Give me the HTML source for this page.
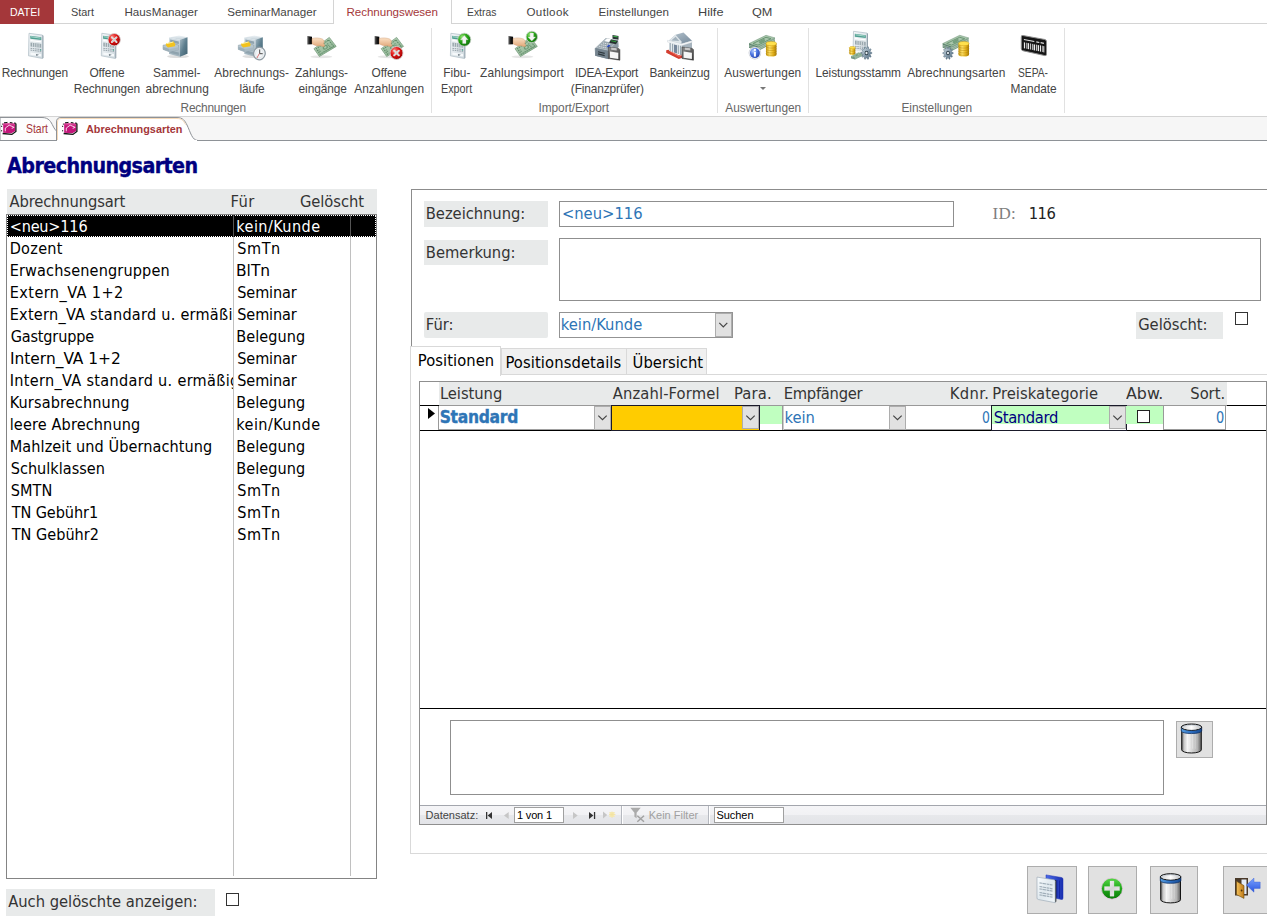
<!DOCTYPE html>
<html lang="de"><head><meta charset="utf-8"><title>Abrechnungsarten</title>
<style>
html,body{margin:0;padding:0;background:#fff;}
body{width:1267px;height:923px;position:relative;overflow:hidden;}
.b{position:absolute;box-sizing:border-box;}
.t{position:absolute;white-space:pre;line-height:1.2;transform-origin:0 0;}
.p{display:inline-block;width:0;height:0;}
svg{position:absolute;overflow:visible;}
.f-seg{font-family:"Liberation Sans", sans-serif;font-size:11.9px;font-weight:400;}
.f-menu{font-family:"Liberation Sans", sans-serif;font-size:11.6px;font-weight:400;}
.f-segb{font-family:"Liberation Sans", sans-serif;font-size:11.5px;font-weight:700;}
.f-tah{font-family:"DejaVu Sans Condensed", "DejaVu Sans", "Liberation Sans", sans-serif;font-size:16.4px;font-weight:400;font-stretch:condensed;}
.f-lst{font-family:"DejaVu Sans Condensed", "DejaVu Sans", "Liberation Sans", sans-serif;font-size:16.1px;font-weight:400;font-stretch:condensed;}
.f-tahb{font-family:"DejaVu Sans Condensed", "DejaVu Sans", "Liberation Sans", sans-serif;font-size:17.3px;font-weight:700;font-stretch:condensed;-webkit-text-stroke:0.35px currentColor;}
.f-title{font-family:"DejaVu Sans Condensed", "DejaVu Sans", "Liberation Sans", sans-serif;font-size:21.3px;font-weight:700;font-stretch:condensed;-webkit-text-stroke:0.35px currentColor;}
.f-ser{font-family:"Liberation Serif", serif;font-size:17px;font-weight:400;}
.f-nav{font-family:"Liberation Sans", sans-serif;font-size:11px;font-weight:400;}
</style></head><body>

<div class="b" style="left:0px;top:23px;width:1267px;height:1px;background:#d4d4d4;"></div>
<div class="b" style="left:0px;top:0px;width:54px;height:24px;background:#a4373a;"></div>
<div class="b" style="left:333px;top:0px;width:119px;height:24px;background:#fff;border:1px solid #d4d4d4;border-bottom:none;border-top:none;"></div>
<div class="b" style="left:0px;top:116px;width:1267px;height:1px;background:#d4d4d4;"></div>
<div class="b" style="left:431px;top:28px;width:1px;height:85px;background:#e1e1e1;"></div>
<div class="b" style="left:717px;top:28px;width:1px;height:85px;background:#e1e1e1;"></div>
<div class="b" style="left:808px;top:28px;width:1px;height:85px;background:#e1e1e1;"></div>
<div class="b" style="left:1064px;top:28px;width:1px;height:85px;background:#e1e1e1;"></div>
<svg style="left:759.500px;top:86.500px" width="6" height="3"><path d="M0 0h6L3 3z" fill="#777"/></svg>
<div class="b" style="left:0px;top:117px;width:1267px;height:24px;background:#f6f6f6;"></div>
<div class="b" style="left:0px;top:140px;width:1267px;height:1px;background:#8e9297;"></div>
<svg style="left:0;top:117px" width="210" height="24" viewBox="0 0 210 24">
<path d="M0 0.500H42C49 0.500 51 5 53 9 54.500 12 55.500 13 56.500 14V23.500H0z" fill="#fdfdfd" stroke="#8e9297" stroke-width="1"/>
<path d="M56.500 24V5C56.500 2 58 0.500 61 0.500H177C183 0.500 185 4 187 8 190.500 15 192 23.500 198 23.500" fill="#fff" stroke="#8e9297" stroke-width="1"/>
<path d="M57.200 24H197" stroke="#fff" stroke-width="2"/>
<path d="M57.500 23V5C57.500 3 59 1.500 61 1.500H177C181.500 1.500 183.500 3.500 185.500 7.500" fill="none" stroke="#f5d9b8" stroke-width="1"/>
</svg>
<div class="b" style="left:7px;top:189px;width:370px;height:25px;background:#e8eaea;"></div>
<div class="b" style="left:6px;top:214px;width:371px;height:665px;background:#fff;border:1px solid #848484;"></div>
<div class="b" style="left:233px;top:215px;width:1px;height:661px;background:#c0c0c0;"></div>
<div class="b" style="left:350px;top:215px;width:1px;height:661px;background:#c0c0c0;"></div>
<div class="b" style="left:7px;top:215px;width:369px;height:22px;background:#000;outline:1px dotted #fff;outline-offset:-1px;"></div>
<div class="b" style="left:233px;top:215px;width:1px;height:22px;background:#555;"></div>
<div class="b" style="left:350px;top:215px;width:1px;height:22px;background:#555;"></div>
<div class="b" style="left:6px;top:889px;width:209px;height:27px;background:#e8eaea;"></div>
<div class="b" style="left:226px;top:893px;width:13px;height:13px;background:#fff;border:1px solid #333;"></div>
<div class="b" style="left:411px;top:189px;width:870px;height:1px;background:#8c8c8c;"></div>
<div class="b" style="left:411px;top:189px;width:1px;height:157px;background:#8c8c8c;"></div>
<div class="b" style="left:424px;top:201px;width:124px;height:26px;background:#e8eaea;"></div>
<div class="b" style="left:559px;top:201px;width:395px;height:26px;background:#fff;border:1px solid #8f8f8f;"></div>
<div class="b" style="left:424px;top:240px;width:124px;height:25px;background:#e8eaea;"></div>
<div class="b" style="left:559px;top:238px;width:702px;height:63px;background:#fff;border:1px solid #8f8f8f;"></div>
<div class="b" style="left:424px;top:312px;width:124px;height:26px;background:#e8eaea;border-radius:2px;"></div>
<div class="b" style="left:559px;top:312px;width:174px;height:26px;background:#fff;border:1px solid #939393;"></div>
<div class="b" style="left:715px;top:313px;width:17px;height:24px;background:#e1e1e1;border:1px solid #adadad;"></div>
<svg style="left:719px;top:322px" width="9" height="6"><path d="M0.300 0.800L4.300 4.800 8.300 0.800" fill="none" stroke="#444" stroke-width="1.200"/></svg>
<div class="b" style="left:1136px;top:312px;width:87px;height:27px;background:#e8eaea;"></div>
<div class="b" style="left:1235px;top:312px;width:13px;height:13px;background:#fff;border:1px solid #333;"></div>
<div class="b" style="left:410px;top:374px;width:870px;height:1px;background:#d9d9d9;"></div>
<div class="b" style="left:410px;top:374px;width:1px;height:480px;background:#d9d9d9;"></div>
<div class="b" style="left:410px;top:853px;width:870px;height:1px;background:#d9d9d9;"></div>
<div class="b" style="left:410px;top:346px;width:91px;height:30px;background:#fff;border:1px solid #d9d9d9;border-bottom:none;"></div>
<div class="b" style="left:501px;top:348px;width:126px;height:27px;background:#f0f0f0;border:1px solid #d9d9d9;"></div>
<div class="b" style="left:626px;top:348px;width:81px;height:27px;background:#f0f0f0;border:1px solid #d9d9d9;"></div>
<div class="b" style="left:419px;top:381px;width:848px;height:444px;background:#fff;border:1px solid #8f8f8f;"></div>
<div class="b" style="left:439px;top:382px;width:788px;height:23px;background:#e8eaea;"></div>
<div class="b" style="left:420px;top:405px;width:846px;height:1px;background:#999;"></div>
<div class="b" style="left:420px;top:405px;width:19px;height:1px;background:#000;"></div>
<div class="b" style="left:1227px;top:405px;width:39px;height:1px;background:#000;"></div>
<div class="b" style="left:420px;top:430px;width:846px;height:1px;background:#000;"></div>
<div class="b" style="left:438px;top:406px;width:1px;height:24px;background:#999;"></div>
<div class="b" style="left:439px;top:429px;width:172px;height:1px;background:#a0a0a0;"></div>
<div class="b" style="left:784px;top:429px;width:207px;height:1px;background:#a0a0a0;"></div>
<svg style="left:428px;top:408px" width="7" height="11"><path d="M0 0L7 5.500 0 11z" fill="#000"/></svg>
<div class="b" style="left:594px;top:406px;width:17px;height:24px;background:#e1e1e1;border:1px solid #adadad;"></div>
<svg style="left:598px;top:415px" width="9" height="6"><path d="M0.3 0.6L4.500 4.600 8.700 0.600" fill="none" stroke="#444" stroke-width="1.200"/></svg>
<div class="b" style="left:611px;top:405px;width:149px;height:26px;background:#ffcc00;border:1px solid #1a1a2a;"></div>
<div class="b" style="left:742px;top:406px;width:17px;height:23px;background:#e1e1e1;border:1px solid #adadad;"></div>
<svg style="left:746px;top:415px" width="9" height="6"><path d="M0.3 0.6L4.500 4.600 8.700 0.600" fill="none" stroke="#444" stroke-width="1.200"/></svg>
<div class="b" style="left:760px;top:406px;width:22px;height:18px;background:#c0ffc0;"></div>
<div class="b" style="left:782px;top:406px;width:1px;height:24px;background:#999;"></div>
<div class="b" style="left:783px;top:406px;width:1px;height:24px;background:#ccc;"></div>
<div class="b" style="left:889px;top:406px;width:17px;height:24px;background:#e1e1e1;border:1px solid #adadad;"></div>
<svg style="left:893px;top:415px" width="9" height="6"><path d="M0.3 0.6L4.500 4.600 8.700 0.600" fill="none" stroke="#444" stroke-width="1.200"/></svg>
<div class="b" style="left:991px;top:405px;width:136px;height:26px;background:#fff;border:1px solid #1a1a2a;"></div>
<div class="b" style="left:992px;top:406px;width:117px;height:18px;background:#c0ffc0;"></div>
<div class="b" style="left:1109px;top:406px;width:17px;height:23px;background:#e1e1e1;border:1px solid #adadad;"></div>
<svg style="left:1113px;top:415px" width="9" height="6"><path d="M0.3 0.6L4.500 4.600 8.700 0.600" fill="none" stroke="#444" stroke-width="1.200"/></svg>
<div class="b" style="left:1126px;top:406px;width:37px;height:18px;background:#c0ffc0;"></div>
<div class="b" style="left:1137px;top:410px;width:13px;height:13px;background:#fff;border:1px solid #222;"></div>
<div class="b" style="left:1163px;top:406px;width:63px;height:24px;background:#fff;border:1px solid #999;border-top:none;"></div>
<div class="b" style="left:420px;top:708px;width:846px;height:1px;background:#000;"></div>
<div class="b" style="left:450px;top:720px;width:714px;height:75px;background:#fff;border:1px solid #8f8f8f;"></div>
<div class="b" style="left:1176px;top:721px;width:37px;height:37px;background:#e1e1e1;border:1px solid #adadad;"></div>
<div class="b" style="left:420px;top:805px;width:846px;height:19px;background:linear-gradient(#f5f5f7 0,#f1f1f4 50%,#e7e8eb 50%,#e3e4e8 100%);border-top:1px solid #a3a6ad;"></div>
<div class="b" style="left:621px;top:806px;width:1px;height:18px;background:#b5b8bf;"></div>
<div class="b" style="left:622px;top:806px;width:1px;height:18px;background:#fff;"></div>
<div class="b" style="left:708px;top:806px;width:1px;height:18px;background:#b5b8bf;"></div>
<div class="b" style="left:709px;top:806px;width:1px;height:18px;background:#fff;"></div>
<div class="b" style="left:514px;top:807px;width:50px;height:16px;background:#fff;border:1px solid #a0a0a0;"></div>
<div class="b" style="left:714px;top:807px;width:70px;height:16px;background:#fff;border:1px solid #a0a0a0;"></div>
<svg style="left:486px;top:811.500px" width="7" height="7"><path d="M0.650 0v7" stroke="#333" stroke-width="1.300"/><path d="M6 0L1.600 3.500 6 7z" fill="#333"/></svg>
<svg style="left:503.500px;top:811.500px" width="5" height="7"><path d="M4.700 0L0 3.500 4.700 7z" fill="#c6c6c6"/></svg>
<svg style="left:572.500px;top:811.500px" width="5" height="7"><path d="M0 0L4.700 3.500 0 7z" fill="#c6c6c6"/></svg>
<svg style="left:588.800px;top:811.500px" width="7" height="7"><path d="M5.550 0v7" stroke="#333" stroke-width="1.300"/><path d="M0 0L4.400 3.500 0 7z" fill="#333"/></svg>
<svg style="left:603px;top:811px" width="13" height="8"><path d="M0 0.500L4.200 4 0 7.500z" fill="#c6c6c6"/><path d="M6.500 1h5v5h-5z" fill="#f6ebba"/><path d="M6 3.500h6.500M9 0.500v6.500M6.800 1.300l4.400 4.400M11.200 1.300l-4.400 4.400" stroke="#f3e2a0" stroke-width=".8"/></svg>
<svg style="left:630px;top:807px" width="16" height="15"><path d="M0.300 0.800h10.400L6.600 5.800v5.400l-2.200-1.500V5.800z" fill="#ababab"/><path d="M7.300 8.800l6.700 6M14 8.800l-6.700 6" stroke="#a2a2a2" stroke-width="1.500"/></svg>
<div class="b" style="left:1027px;top:866px;width:50px;height:48px;background:#e1e1e1;border:1px solid #adadad;"></div>
<div class="b" style="left:1088px;top:866px;width:49px;height:48px;background:#e1e1e1;border:1px solid #adadad;"></div>
<div class="b" style="left:1150px;top:866px;width:48px;height:48px;background:#e1e1e1;border:1px solid #adadad;"></div>
<div class="b" style="left:1223px;top:866px;width:50px;height:48px;background:#e1e1e1;border:1px solid #adadad;"></div>
<svg style="left:0;top:0" width="1267" height="923" viewBox="0 0 1267 923"><defs><linearGradient id="g1" x1="0" y1="0" x2="1" y2="1"><stop offset="0" stop-color="#f4f7f9"/><stop offset="1" stop-color="#cfd9df"/></linearGradient><radialGradient id="g2" cx="0.35" cy="0.3" r="0.75"><stop offset="0" stop-color="#ff8a80"/><stop offset="0.45" stop-color="#e01818"/><stop offset="1" stop-color="#a00000"/></radialGradient><radialGradient id="g3" cx="0.35" cy="0.3" r="0.75"><stop offset="0" stop-color="#9be87a"/><stop offset="0.45" stop-color="#2aa818"/><stop offset="1" stop-color="#0c6e08"/></radialGradient><radialGradient id="g4" cx="0.35" cy="0.3" r="0.75"><stop offset="0" stop-color="#b4ccff"/><stop offset="0.5" stop-color="#4a74e0"/><stop offset="1" stop-color="#2444b0"/></radialGradient><linearGradient id="g5" x1="0" y1="0" x2="1" y2="0"><stop offset="0" stop-color="#c89a10"/><stop offset="0.35" stop-color="#ffe26a"/><stop offset="0.7" stop-color="#e6b41c"/><stop offset="1" stop-color="#a87c08"/></linearGradient><linearGradient id="g6" x1="0" y1="0" x2="1" y2="1"><stop offset="0" stop-color="#a9bcc6"/><stop offset="0.5" stop-color="#5e7f8f"/><stop offset="1" stop-color="#3f6070"/></linearGradient><linearGradient id="g7" x1="0" y1="0" x2="0" y2="1"><stop offset="0" stop-color="#d6e0e6"/><stop offset="1" stop-color="#9fb2bc"/></linearGradient><linearGradient id="g8" x1="0" y1="0" x2="0" y2="1"><stop offset="0" stop-color="#eef3f6"/><stop offset="1" stop-color="#c2d0d8"/></linearGradient><linearGradient id="g9" x1="0" y1="0" x2="0" y2="1"><stop offset="0" stop-color="#fbe0c4"/><stop offset="1" stop-color="#e0a678"/></linearGradient><linearGradient id="g10" x1="0" y1="0" x2="1" y2="1"><stop offset="0" stop-color="#bcd6bd"/><stop offset="1" stop-color="#86ad8a"/></linearGradient><linearGradient id="g11" x1="0" y1="0" x2="1" y2="0"><stop offset="0" stop-color="#6a6a6a"/><stop offset="0.5" stop-color="#1a1a1a"/><stop offset="1" stop-color="#000"/></linearGradient><linearGradient id="g12" x1="0" y1="0" x2="1" y2="0"><stop offset="0" stop-color="#5a5a5a"/><stop offset="0.12" stop-color="#c8c8c8"/><stop offset="0.3" stop-color="#f4f4f4"/><stop offset="0.55" stop-color="#d2d2d2"/><stop offset="0.8" stop-color="#b4b4b4"/><stop offset="1" stop-color="#5a5a5a"/></linearGradient><linearGradient id="g13" x1="0" y1="0" x2="1" y2="0"><stop offset="0" stop-color="#5aa0e0"/><stop offset="0.5" stop-color="#2a6cc0"/><stop offset="1" stop-color="#174a90"/></linearGradient><linearGradient id="g14" x1="0" y1="0" x2="1" y2="1"><stop offset="0" stop-color="#dfe8ee"/><stop offset="0.5" stop-color="#8aa0b0"/><stop offset="1" stop-color="#4a6478"/></linearGradient><linearGradient id="g15" x1="0" y1="0" x2="1" y2="1"><stop offset="0" stop-color="#b8c6d0"/><stop offset="1" stop-color="#74889a"/></linearGradient><linearGradient id="g16" x1="0" y1="0" x2="1" y2="1"><stop offset="0" stop-color="#8c8c8c"/><stop offset="1" stop-color="#3c3c3c"/></linearGradient><linearGradient id="g17" x1="0" y1="0" x2="0" y2="1"><stop offset="0" stop-color="#cdd5da"/><stop offset="1" stop-color="#7e8c96"/></linearGradient><linearGradient id="g18" x1="0" y1="0" x2="1" y2="0"><stop offset="0" stop-color="#4a6ae8"/><stop offset="1" stop-color="#1a30b0"/></linearGradient><linearGradient id="g19" x1="0" y1="0" x2="0" y2="1"><stop offset="0" stop-color="#5ad84a"/><stop offset="0.5" stop-color="#1ea818"/><stop offset="1" stop-color="#0c7a0a"/></linearGradient><linearGradient id="g20" x1="0" y1="0" x2="1" y2="1"><stop offset="0" stop-color="#ffffff"/><stop offset="0.5" stop-color="#d4d4d4"/><stop offset="1" stop-color="#f4f4f4"/></linearGradient><linearGradient id="g21" x1="0" y1="0" x2="0" y2="1"><stop offset="0" stop-color="#7aa2ff"/><stop offset="1" stop-color="#2a56e0"/></linearGradient><linearGradient id="g22" x1="0" y1="0" x2="1" y2="1"><stop offset="0" stop-color="#fafdff"/><stop offset="0.5" stop-color="#dfe8ee"/><stop offset="1" stop-color="#f2f7fa"/></linearGradient><linearGradient id="g23" x1="0" y1="0" x2="1" y2="0"><stop offset="0" stop-color="#d8d8d8"/><stop offset="0.5" stop-color="#ffffff"/><stop offset="1" stop-color="#c8c8c8"/></linearGradient><linearGradient id="g24" x1="0" y1="0" x2="1" y2="0"><stop offset="0" stop-color="#f2c05a"/><stop offset="1" stop-color="#c07a18"/></linearGradient></defs><g transform="translate(28 32.5)"><path d="M1 0.800L14.500 2.600V26L0.500 23.300z" fill="url(#g1)" stroke="#aebbc4" stroke-width="0.700"/>
<path d="M2.300 3.300L13.300 4.800V7.600L2.300 6.200z" fill="#4f9f90"/>
<path d="M3 4.300l9.500 1.300" stroke="#bfe4da" stroke-width="0.800"/>
<path d="M2.500 8L13.200 9.400" stroke="#fff" stroke-width="1.200"/>
<path d="M2.500 10L13.200 11.400V15.200L2.500 14z" fill="#9aa8ae"/>
<path d="M4.500 10.300v4M6.700 10.600v4M8.900 10.900v4M11.100 11.200v4" stroke="#dfe6ea" stroke-width="0.800"/>
<path d="M2.500 15.800L13.200 17.100M2.500 17.600L13.200 18.900" stroke="#8e9ca4" stroke-width="0.900" stroke-dasharray="1.600 0.700"/>
<path d="M12 16.800l1.200.2v1.200l-1.200-.2z" fill="#49a08e"/>
<path d="M2.500 20L13.200 21.500V24L2.500 22.300z" fill="#f6f9fb"/>
<path d="M8 21.600l3 .6-2.600 1.300z" fill="#6a7880"/>
<path d="M14.500 2.600l1 .6V25.400l-1 .6z" fill="#93a2ac"/></g>
<g transform="translate(100.8 32.5)"><path d="M1 0.800L14.500 2.600V26L0.500 23.300z" fill="url(#g1)" stroke="#aebbc4" stroke-width="0.700"/>
<path d="M2.300 3.300L13.300 4.800V7.600L2.300 6.200z" fill="#4f9f90"/>
<path d="M3 4.300l9.500 1.300" stroke="#bfe4da" stroke-width="0.800"/>
<path d="M2.500 8L13.200 9.400" stroke="#fff" stroke-width="1.200"/>
<path d="M2.500 10L13.200 11.400V15.200L2.500 14z" fill="#9aa8ae"/>
<path d="M4.500 10.300v4M6.700 10.600v4M8.900 10.900v4M11.100 11.200v4" stroke="#dfe6ea" stroke-width="0.800"/>
<path d="M2.500 15.800L13.200 17.100M2.500 17.600L13.200 18.900" stroke="#8e9ca4" stroke-width="0.900" stroke-dasharray="1.600 0.700"/>
<path d="M12 16.800l1.200.2v1.200l-1.200-.2z" fill="#49a08e"/>
<path d="M2.500 20L13.200 21.500V24L2.500 22.300z" fill="#f6f9fb"/>
<path d="M8 21.600l3 .6-2.600 1.300z" fill="#6a7880"/>
<path d="M14.500 2.600l1 .6V25.400l-1 .6z" fill="#93a2ac"/></g>
<g transform="translate(114.2 39.7)"><circle r="6.2" fill="url(#g2)" stroke="#d8d0d0" stroke-width="0.900"/>
<path d="M-2.300-2.300L2.300 2.300M2.300-2.300L-2.300 2.300" stroke="#e6e6e6" stroke-width="2" stroke-linecap="round"/>
<path d="M-2.300-2.300L2.300 2.300M2.300-2.300L-2.300 2.300" stroke="#bdbdbd" stroke-width=".8" stroke-linecap="round" opacity=".7"/></g>
<g transform="translate(163 35.2)"><ellipse cx="15" cy="21.300" rx="11" ry="1.600" fill="#000" opacity=".13"/>
<path d="M6 2.200L16 0.300 24.500 2 17 4.500z" fill="url(#g8)"/>
<path d="M17 4.500L24.500 2V18.500L17 21.500z" fill="url(#g6)"/>
<path d="M6 2.200L17 4.500V21.500L6 18.800z" fill="url(#g7)"/>
<path d="M7.200 4.300L15.800 6.200V8.800L7.200 7.200z" fill="#8fa3ae"/>
<path d="M7.200 15.200L15.800 17.200V19.800L7.200 17.800z" fill="#8fa3ae"/>
<path d="M0 10L10 8.300 15.500 9.800V14.600L6.500 16.600 0 14.200z" fill="#b7c6ce" stroke="#8a9ca6" stroke-width=".5"/>
<path d="M3 8.300L10.500 6.300 12.300 8.800 12 11 4.800 12.300 2.800 10z" fill="#f2c21e"/>
<path d="M3.500 8.500L10.300 6.800" stroke="#fff2a0" stroke-width="1"/>
<path d="M0 11.500L6.500 13.800V16.600L0 14.200z" fill="#9cafb9"/>
<path d="M6.500 13.800L15.500 12V14.600L6.500 16.600z" fill="#a9bac3"/></g>
<g transform="translate(238.3 35.2)"><ellipse cx="15" cy="21.300" rx="11" ry="1.600" fill="#000" opacity=".13"/>
<path d="M6 2.200L16 0.300 24.500 2 17 4.500z" fill="url(#g8)"/>
<path d="M17 4.500L24.500 2V18.500L17 21.500z" fill="url(#g6)"/>
<path d="M6 2.200L17 4.500V21.500L6 18.800z" fill="url(#g7)"/>
<path d="M7.200 4.300L15.800 6.200V8.800L7.200 7.200z" fill="#8fa3ae"/>
<path d="M7.200 15.200L15.800 17.200V19.800L7.200 17.800z" fill="#8fa3ae"/>
<path d="M0 10L10 8.300 15.500 9.800V14.600L6.500 16.600 0 14.200z" fill="#b7c6ce" stroke="#8a9ca6" stroke-width=".5"/>
<path d="M3 8.300L10.500 6.300 12.300 8.800 12 11 4.800 12.300 2.800 10z" fill="#f2c21e"/>
<path d="M3.500 8.500L10.300 6.800" stroke="#fff2a0" stroke-width="1"/>
<path d="M0 11.500L6.500 13.800V16.600L0 14.200z" fill="#9cafb9"/>
<path d="M6.500 13.800L15.500 12V14.600L6.500 16.600z" fill="#a9bac3"/></g>
<g transform="translate(259.4 53.5)"><ellipse rx="5.796" ry="6.3" transform="rotate(12)" fill="#f2f5f7" stroke="#8e9aa2" stroke-width="1.300"/>
<ellipse rx="3.78" ry="4.536" transform="rotate(12)" fill="none" stroke="#dfe4e8" stroke-width=".8"/>
<path d="M0.300-4V0.200H3.300" fill="none" stroke="#4a4a4a" stroke-width="1"/>
<path d="M0 0L-2.500 4.500" stroke="#d04040" stroke-width=".7"/></g>
<g transform="translate(307.3 36)"><ellipse cx="14" cy="20.800" rx="11" ry="1.500" fill="#000" opacity=".10"/>
<path d="M22 1.400L28.900 10.400 12.100 20.500 6.600 12.700z" fill="url(#g10)" stroke="#6f9676" stroke-width=".7"/>
<path d="M21.300 4L26.300 10.300 12.800 18.300 9 12.800z" fill="none" stroke="#5f8c6a" stroke-width="1.100" stroke-dasharray="1.500 .8"/>
<path d="M20 7.500L23.500 11.800M13 15.800L11 13" stroke="#6a9472" stroke-width="1.400" stroke-dasharray="1 .7"/>
<ellipse cx="18" cy="11.300" rx="2.800" ry="2.100" transform="rotate(-30 18 11.300)" fill="#6f9c78"/>
<ellipse cx="18" cy="11.300" rx="1.400" ry="1" transform="rotate(-30 18 11.300)" fill="#a9c9ae"/>
<path d="M0 0L4.700 .8V8.300L0 8.600z" fill="url(#g11)"/>
<path d="M4.700 2.500C8 1.600 12 1.800 15 3 17 4.200 17.300 5.800 16.300 7.300L17.500 9.500 16.500 10.800 12.500 9.800C10 10.300 7.500 9.500 4.700 7.800z" fill="url(#g9)" stroke="#c98f62" stroke-width=".4"/></g>
<g transform="translate(374.6 36)"><ellipse cx="14" cy="20.800" rx="11" ry="1.500" fill="#000" opacity=".10"/>
<path d="M22 1.400L28.900 10.400 12.100 20.500 6.600 12.700z" fill="url(#g10)" stroke="#6f9676" stroke-width=".7"/>
<path d="M21.300 4L26.300 10.300 12.800 18.300 9 12.800z" fill="none" stroke="#5f8c6a" stroke-width="1.100" stroke-dasharray="1.500 .8"/>
<path d="M20 7.500L23.500 11.800M13 15.800L11 13" stroke="#6a9472" stroke-width="1.400" stroke-dasharray="1 .7"/>
<ellipse cx="18" cy="11.300" rx="2.800" ry="2.100" transform="rotate(-30 18 11.300)" fill="#6f9c78"/>
<ellipse cx="18" cy="11.300" rx="1.400" ry="1" transform="rotate(-30 18 11.300)" fill="#a9c9ae"/>
<path d="M0 0L4.700 .8V8.300L0 8.600z" fill="url(#g11)"/>
<path d="M4.700 2.500C8 1.600 12 1.800 15 3 17 4.200 17.300 5.800 16.300 7.300L17.500 9.500 16.500 10.800 12.500 9.800C10 10.300 7.500 9.500 4.700 7.800z" fill="url(#g9)" stroke="#c98f62" stroke-width=".4"/></g>
<g transform="translate(396.5 53)"><circle r="6.5" fill="url(#g2)" stroke="#d8d0d0" stroke-width="0.900"/>
<path d="M-2.300-2.300L2.300 2.300M2.300-2.300L-2.300 2.300" stroke="#e6e6e6" stroke-width="2" stroke-linecap="round"/>
<path d="M-2.300-2.300L2.300 2.300M2.300-2.300L-2.300 2.300" stroke="#bdbdbd" stroke-width=".8" stroke-linecap="round" opacity=".7"/></g>
<g transform="translate(449.9 32.5)"><path d="M1 0.800L14.500 2.600V26L0.500 23.300z" fill="url(#g1)" stroke="#aebbc4" stroke-width="0.700"/>
<path d="M2.300 3.300L13.300 4.800V7.600L2.300 6.200z" fill="#4f9f90"/>
<path d="M3 4.300l9.500 1.300" stroke="#bfe4da" stroke-width="0.800"/>
<path d="M2.500 8L13.200 9.400" stroke="#fff" stroke-width="1.200"/>
<path d="M2.500 10L13.200 11.400V15.200L2.500 14z" fill="#9aa8ae"/>
<path d="M4.500 10.300v4M6.700 10.600v4M8.900 10.900v4M11.100 11.200v4" stroke="#dfe6ea" stroke-width="0.800"/>
<path d="M2.500 15.800L13.200 17.100M2.500 17.600L13.200 18.900" stroke="#8e9ca4" stroke-width="0.900" stroke-dasharray="1.600 0.700"/>
<path d="M12 16.800l1.200.2v1.200l-1.200-.2z" fill="#49a08e"/>
<path d="M2.500 20L13.200 21.500V24L2.500 22.300z" fill="#f6f9fb"/>
<path d="M8 21.600l3 .6-2.600 1.300z" fill="#6a7880"/>
<path d="M14.500 2.600l1 .6V25.400l-1 .6z" fill="#93a2ac"/></g>
<g transform="translate(464.3 39.7)"><circle r="6.5" fill="url(#g3)" stroke="#c8d0c8" stroke-width="0.800"/>
<path d="M0-4.200L3.800 0H1.700V3.800H-1.700V0H-3.800z" fill="#f4f4f4" stroke="#d0d0d0" stroke-width=".3"/></g>
<g transform="translate(508.4 36)"><ellipse cx="14" cy="20.800" rx="11" ry="1.500" fill="#000" opacity=".10"/>
<path d="M22 1.400L28.900 10.400 12.100 20.500 6.600 12.700z" fill="url(#g10)" stroke="#6f9676" stroke-width=".7"/>
<path d="M21.300 4L26.300 10.300 12.800 18.300 9 12.800z" fill="none" stroke="#5f8c6a" stroke-width="1.100" stroke-dasharray="1.500 .8"/>
<path d="M20 7.500L23.500 11.800M13 15.800L11 13" stroke="#6a9472" stroke-width="1.400" stroke-dasharray="1 .7"/>
<ellipse cx="18" cy="11.300" rx="2.800" ry="2.100" transform="rotate(-30 18 11.300)" fill="#6f9c78"/>
<ellipse cx="18" cy="11.300" rx="1.400" ry="1" transform="rotate(-30 18 11.300)" fill="#a9c9ae"/>
<path d="M0 0L4.700 .8V8.300L0 8.600z" fill="url(#g11)"/>
<path d="M4.700 2.500C8 1.600 12 1.800 15 3 17 4.200 17.300 5.800 16.300 7.300L17.500 9.500 16.500 10.800 12.500 9.800C10 10.300 7.500 9.500 4.700 7.800z" fill="url(#g9)" stroke="#c98f62" stroke-width=".4"/></g>
<g transform="translate(531.8 36.9)"><circle r="5.7" fill="url(#g3)" stroke="#c8d0c8" stroke-width="0.800"/>
<path transform="rotate(180)" d="M0-4.200L3.800 0H1.700V3.800H-1.700V0H-3.800z" fill="#f4f4f4" stroke="#d0d0d0" stroke-width=".3"/></g>
<g transform="translate(594.7 34.7)"><path d="M0 13.800L11 3.500 23.500 5.500 24 12 14 24.500 0.500 21z" fill="#8d9aa3"/>
<path d="M11 3.500L23.500 5.500 13.500 16 1 13.300z" fill="#b9c3c9"/>
<path d="M9 6.500L20 8.300 13.500 15 2.500 12.800z" fill="#98a5ad"/>
<path d="M4.500 11.800L12.500 13.400M6.500 10L14.300 11.500M8.300 8.300L16 9.700" stroke="#e4e9ec" stroke-width=".9" stroke-dasharray="1.300 .7"/>
<path d="M12.300 3.800L16.300 4.500 14 7.200 10 6.400z" fill="#fff"/>
<path d="M17.800 .3L23.800 1.200V5L17.800 4z" fill="#2a3436"/>
<path d="M18.500 1.500L23 2.200" stroke="#3fae4a" stroke-width="1.100"/>
<path d="M16.300 4.800L23.300 6 21.300 9.500 14.500 8z" fill="#27312f"/>
<path d="M16.500 6L21.500 7" stroke="#2e9a3a" stroke-width="1.100"/>
<path d="M13.500 10l2.300.4-1.500 2.200-2.300-.4z" fill="#3050c8"/>
<path d="M1 13.300L13.500 16V24.300L0.500 21z" fill="#75848f"/>
<path d="M3.300 17L10 18.700M3.300 19.200L10 20.900" stroke="#2e383e" stroke-width="1.100"/></g>
<g transform="translate(608.4 46.7)"><path d="M0 0.300L10.300 1.700 11.500 3V13.500L0 11.800z" fill="url(#g16)" stroke="#2e2e2e" stroke-width=".5"/>
<path d="M1.600 4.800L9.900 6V12.300L1.600 11z" fill="#f6f6f6"/>
<path d="M2.800 .9L8.300 1.600V3.700L2.800 3z" fill="#c8c8c8"/></g>
<g transform="translate(667 32.5)"><path d="M-0.800 17.800L1.500 17.200 11.500 22.800 16 21.300V25L11.800 26.400-0.800 20.200z" fill="#d43e30"/>
<path d="M3 19.300L11.800 24.200 15 23.200V22L11.500 23 4 18.800z" fill="#ee7466"/>
<path d="M2 8L8.500 2.300 16.500 0 25 8.300 14.500 11.500z" fill="url(#g15)"/>
<path d="M2 8L8.500 2.300 14.500 9V11.500z" fill="#dfe6ea"/>
<path d="M4.300 8L8.600 4.200 12.300 8.600z" fill="#a3b2bd"/>
<path d="M0.500 7.800L14.500 11.300 25 8.200V10L14.500 13.300 0.500 9.600z" fill="#f4f6f8" stroke="#b8c2ca" stroke-width=".3"/>
<path d="M2 10V18.300L14.500 23V13.300z" fill="#e8edf0"/>
<path d="M3.200 10.500V18.600M5.600 11.200V19.500M11.300 12.700V21.600M13.500 13.200V22.400" stroke="#95a4ae" stroke-width="1.100"/>
<path d="M7 12V20L10 21V12.800z" fill="#76869a"/>
<path d="M14.500 13.300L25 10V18L14.500 23z" fill="#a7b4be"/></g>
<g transform="translate(682 46.7)"><path d="M0 0.300L10.300 1.700 11.500 3V13.500L0 11.800z" fill="url(#g16)" stroke="#2e2e2e" stroke-width=".5"/>
<path d="M1.600 4.800L9.900 6V12.300L1.600 11z" fill="#f6f6f6"/>
<path d="M2.800 .9L8.300 1.600V3.700L2.800 3z" fill="#c8c8c8"/></g>
<g transform="translate(749 35.3)"><path d="M0 8.300L17 0 26 2.600 9 11.300z" fill="#a9c6ac" stroke="#6d9276" stroke-width=".5"/>
<path d="M4 8.200L17 2 22 3.400 9 9.800z" fill="none" stroke="#6b9674" stroke-width="1"/>
<ellipse cx="13" cy="5.800" rx="3.300" ry="1.500" transform="rotate(-25 13 5.800)" fill="#759f7e"/>
<path d="M0 8.300L9 11.300V15.800L0 12.500z" fill="#58806a"/>
<path d="M9 11.300L26 2.600V7L9 15.800z" fill="#789c84"/>
<path d="M0 9.800L9 12.800M0 11.200L9 14.300M9 12.800L26 4.100M9 14.300L26 5.600" stroke="#d4e2d4" stroke-width=".5"/></g>
<g transform="translate(766 41.5)"><path d="M0 2.1V12.9A5.25 2.1 0 0 0 10.5 12.9V2.1z" fill="url(#g5)"/><path d="M0 4.5A5.25 2.1 0 0 0 10.5 4.5" fill="none" stroke="#a87a08" stroke-width=".5" opacity=".8"/><path d="M0 6.9A5.25 2.1 0 0 0 10.5 6.9" fill="none" stroke="#a87a08" stroke-width=".5" opacity=".8"/><path d="M0 9.299999999999999A5.25 2.1 0 0 0 10.5 9.299999999999999" fill="none" stroke="#a87a08" stroke-width=".5" opacity=".8"/><path d="M0 11.7A5.25 2.1 0 0 0 10.5 11.7" fill="none" stroke="#a87a08" stroke-width=".5" opacity=".8"/><ellipse cx="5.25" cy="2.1" rx="5.25" ry="2.1" fill="#ffe14e" stroke="#c89a14" stroke-width=".5"/></g>
<g transform="translate(754.9 53.1)"><circle r="6.3" fill="#c4c8d0"/><circle r="5.7" fill="#f4f6fa"/><circle r="5.0" fill="url(#g4)"/>
<rect x="-1" y="-1.300" width="2" height="4.800" fill="#fff"/><circle cy="-3.200" r="1.150" fill="#fff"/></g>
<g transform="translate(852.5 30.5)"><path d="M1 0.800L14.500 2.600V26L0.500 23.300z" fill="url(#g1)" stroke="#aebbc4" stroke-width="0.700"/>
<path d="M2.300 3.300L13.300 4.800V7.600L2.300 6.200z" fill="#4f9f90"/>
<path d="M3 4.300l9.500 1.300" stroke="#bfe4da" stroke-width="0.800"/>
<path d="M2.500 8L13.200 9.400" stroke="#fff" stroke-width="1.200"/>
<path d="M2.500 10L13.200 11.400V15.200L2.500 14z" fill="#9aa8ae"/>
<path d="M4.500 10.300v4M6.700 10.600v4M8.900 10.900v4M11.100 11.200v4" stroke="#dfe6ea" stroke-width="0.800"/>
<path d="M2.500 15.800L13.200 17.100M2.500 17.600L13.200 18.900" stroke="#8e9ca4" stroke-width="0.900" stroke-dasharray="1.600 0.700"/>
<path d="M12 16.800l1.200.2v1.200l-1.200-.2z" fill="#49a08e"/>
<path d="M2.500 20L13.200 21.500V24L2.500 22.300z" fill="#f6f9fb"/>
<path d="M8 21.600l3 .6-2.600 1.300z" fill="#6a7880"/>
<path d="M14.500 2.600l1 .6V25.400l-1 .6z" fill="#93a2ac"/></g>
<g transform="translate(849.3 46.5)"><path d="M0 1.2000000000000002V7.3A3.0 1.2000000000000002 0 0 0 6 7.3V1.2000000000000002z" fill="url(#g5)"/><path d="M0 3.6A3.0 1.2000000000000002 0 0 0 6 3.6" fill="none" stroke="#a87a08" stroke-width=".5" opacity=".8"/><path d="M0 6.0A3.0 1.2000000000000002 0 0 0 6 6.0" fill="none" stroke="#a87a08" stroke-width=".5" opacity=".8"/><ellipse cx="3.0" cy="1.2000000000000002" rx="3.0" ry="1.2000000000000002" fill="#ffe14e" stroke="#c89a14" stroke-width=".5"/></g>
<g transform="translate(851 52.5) scale(.45)"><path d="M0 8.300L17 0 26 2.600 9 11.300z" fill="#a9c6ac" stroke="#6d9276" stroke-width=".5"/>
<path d="M4 8.200L17 2 22 3.400 9 9.800z" fill="none" stroke="#6b9674" stroke-width="1"/>
<ellipse cx="13" cy="5.800" rx="3.300" ry="1.500" transform="rotate(-25 13 5.800)" fill="#759f7e"/>
<path d="M0 8.300L9 11.300V15.800L0 12.500z" fill="#58806a"/>
<path d="M9 11.300L26 2.600V7L9 15.800z" fill="#789c84"/>
<path d="M0 9.800L9 12.800M0 11.200L9 14.300M9 12.800L26 4.100M9 14.300L26 5.600" stroke="#d4e2d4" stroke-width=".5"/></g>
<g transform="translate(866.5 53)"><path d="M5.31 -0.57L5.31 0.57L3.74 1.05L3.53 1.83L4.57 3.34L4.02 4.27L2.52 3.53L1.97 4.01L2.09 5.98L1.20 6.33L0.34 4.66L-0.34 4.66L-1.20 6.33L-2.09 5.98L-1.97 4.01L-2.52 3.53L-4.02 4.27L-4.57 3.34L-3.53 1.83L-3.74 1.05L-5.31 0.57L-5.31 -0.57L-3.74 -1.05L-3.53 -1.83L-4.57 -3.34L-4.02 -4.27L-2.52 -3.53L-1.97 -4.01L-2.09 -5.98L-1.20 -6.33L-0.34 -4.66L0.34 -4.66L1.20 -6.33L2.09 -5.98L1.97 -4.01L2.52 -3.53L4.02 -4.27L4.57 -3.34L3.53 -1.83L3.74 -1.05z" fill="url(#g14)" stroke="#50687a" stroke-width=".5"/>
<ellipse rx="1.92" ry="2.34" fill="#30404c"/><ellipse rx="1.07" ry="1.30" fill="#e8eef2"/></g>
<g transform="translate(942.7 35.3)"><path d="M0 8.300L17 0 26 2.600 9 11.300z" fill="#a9c6ac" stroke="#6d9276" stroke-width=".5"/>
<path d="M4 8.200L17 2 22 3.400 9 9.800z" fill="none" stroke="#6b9674" stroke-width="1"/>
<ellipse cx="13" cy="5.800" rx="3.300" ry="1.500" transform="rotate(-25 13 5.800)" fill="#759f7e"/>
<path d="M0 8.300L9 11.300V15.800L0 12.500z" fill="#58806a"/>
<path d="M9 11.300L26 2.600V7L9 15.800z" fill="#789c84"/>
<path d="M0 9.800L9 12.800M0 11.200L9 14.300M9 12.800L26 4.100M9 14.300L26 5.600" stroke="#d4e2d4" stroke-width=".5"/></g>
<g transform="translate(958.5 41.5)"><path d="M0 2.1V12.9A5.25 2.1 0 0 0 10.5 12.9V2.1z" fill="url(#g5)"/><path d="M0 4.5A5.25 2.1 0 0 0 10.5 4.5" fill="none" stroke="#a87a08" stroke-width=".5" opacity=".8"/><path d="M0 6.9A5.25 2.1 0 0 0 10.5 6.9" fill="none" stroke="#a87a08" stroke-width=".5" opacity=".8"/><path d="M0 9.299999999999999A5.25 2.1 0 0 0 10.5 9.299999999999999" fill="none" stroke="#a87a08" stroke-width=".5" opacity=".8"/><path d="M0 11.7A5.25 2.1 0 0 0 10.5 11.7" fill="none" stroke="#a87a08" stroke-width=".5" opacity=".8"/><ellipse cx="5.25" cy="2.1" rx="5.25" ry="2.1" fill="#ffe14e" stroke="#c89a14" stroke-width=".5"/></g>
<g transform="translate(948 53.1)"><path d="M5.15 -0.55L5.15 0.55L3.62 1.02L3.42 1.78L4.43 3.24L3.90 4.14L2.44 3.42L1.91 3.89L2.02 5.80L1.16 6.14L0.33 4.52L-0.33 4.52L-1.16 6.14L-2.02 5.80L-1.91 3.89L-2.44 3.42L-3.90 4.14L-4.43 3.24L-3.42 1.78L-3.62 1.02L-5.15 0.55L-5.15 -0.55L-3.62 -1.02L-3.42 -1.78L-4.43 -3.24L-3.90 -4.14L-2.44 -3.42L-1.91 -3.89L-2.02 -5.80L-1.16 -6.14L-0.33 -4.52L0.33 -4.52L1.16 -6.14L2.02 -5.80L1.91 -3.89L2.44 -3.42L3.90 -4.14L4.43 -3.24L3.42 -1.78L3.62 -1.02z" fill="url(#g14)" stroke="#50687a" stroke-width=".5"/>
<ellipse rx="1.86" ry="2.27" fill="#30404c"/><ellipse rx="1.03" ry="1.26" fill="#e8eef2"/></g>
<g transform="translate(1021.3 35.2)"><path d="M1.500 0.300L23.500 4.300Q25.200 4.700 25.200 6.300V19Q25.200 20.800 23.500 20.400L1.500 15.500Q0 15.100 0 13.600V1.700Q0 0 1.500 0.300z" fill="#161616" stroke="#8e8e8e" stroke-width="1"/><path d="M2.6 7.09L3.70 7.30V13.18L2.6 12.95z" fill="#ededed"/><path d="M4.6 7.47L5.30 7.61V13.51L4.6 13.37z" fill="#ededed"/><path d="M6.3 7.80L7.70 8.06V14.02L6.3 13.72z" fill="#ededed"/><path d="M8.6 8.23L9.50 8.40V14.39L8.6 14.21z" fill="#ededed"/><path d="M10.6 8.61L11.40 8.77V14.79L10.6 14.63z" fill="#ededed"/><path d="M12.3 8.94L13.70 9.20V15.28L12.3 14.98z" fill="#ededed"/><path d="M14.6 9.37L15.50 9.54V15.66L14.6 15.47z" fill="#ededed"/><path d="M16.4 9.72L17.70 9.96V16.12L16.4 15.84z" fill="#ededed"/><path d="M18.6 10.13L19.70 10.34V16.54L18.6 16.31z" fill="#ededed"/><path d="M20.6 10.51L21.30 10.65V16.87L20.6 16.73z" fill="#ededed"/><path d="M22 10.78L23.00 10.97V17.23L22 17.02z" fill="#ededed"/><path d="M2.600 4.300L13 6.300M15 6.700L18 7.300M19.300 7.500L22.600 8.100" stroke="#e0e0e0" stroke-width="1.200"/></g>
<g transform="translate(1 120)"><path d="M2.200 3.500H14.200V11L10.500 13.300 2.200 12.700z" fill="#c4157a"/>
<path d="M2.200 3.500H14.200V5.500L2.200 5.300z" fill="#d63a92"/>
<path d="M14.900 3.600V11.400L10.900 14.400 1.600 13.500" fill="none" stroke="#121212" stroke-width="1.300"/>
<path d="M3 2.800L6.500 2.400M8.800 2.500L11.500 2.900M13 3L15 3.300" stroke="#121212" stroke-width="1"/>
<path d="M0 6.300h1.200M0 10.800h1.200M1.400 3.600v1" stroke="#121212" stroke-width="1"/>
<path d="M4.300 11.300V8L8.200 5.200 13.200 7.300 10.700 8.400" fill="none" stroke="#fbe6f2" stroke-width=".9"/></g>
<g transform="translate(62 120)"><path d="M2.200 3.500H14.200V11L10.500 13.300 2.200 12.700z" fill="#c4157a"/>
<path d="M2.200 3.500H14.200V5.500L2.200 5.300z" fill="#d63a92"/>
<path d="M14.900 3.600V11.400L10.900 14.400 1.600 13.500" fill="none" stroke="#121212" stroke-width="1.300"/>
<path d="M3 2.800L6.500 2.400M8.800 2.500L11.500 2.900M13 3L15 3.300" stroke="#121212" stroke-width="1"/>
<path d="M0 6.300h1.200M0 10.800h1.200M1.400 3.600v1" stroke="#121212" stroke-width="1"/>
<path d="M4.300 11.300V8L8.200 5.200 13.200 7.300 10.700 8.400" fill="none" stroke="#fbe6f2" stroke-width=".9"/></g>
<g transform="translate(1181 724)"><path d="M0.700 3.15V25.85A9.8 3.15 0 0 0 20.3 25.85V3.15z" fill="url(#g12)" stroke="#141414" stroke-width="1"/><path d="M6.3 9.15V24.85" stroke="#fff" stroke-width="1.200" opacity="0.35"/><path d="M8.8 9.15V24.85" stroke="#fff" stroke-width="1.200" opacity="0.25"/><path d="M11.6 9.15V24.85" stroke="#fff" stroke-width="1.200" opacity="0.3"/><path d="M14.3 9.15V24.85" stroke="#fff" stroke-width="1.200" opacity="0.2"/><path d="M0.300 3.15V7.15A10.5 3.15 0 0 0 20.7 7.15V3.15z" fill="url(#g13)" stroke="#0c2a5a" stroke-width=".7"/>
<ellipse cx="10.5" cy="3.15" rx="10.2" ry="3.15" fill="#c9d0d8" stroke="#141414" stroke-width="1"/>
<ellipse cx="10.5" cy="3.65" rx="8.2" ry="2.05" fill="url(#g23)"/></g>
<g transform="translate(1036.5 874.5)"><path d="M9.500 .4L25 3Q26.500 3.300 26.500 4.800V23.500Q26.500 25.300 25 25L9.500 21.500z" fill="url(#g18)" stroke="#1a2cb0" stroke-width=".5"/>
<path d="M20.500 5.500V23M23 6V23.500" stroke="#1626a0" stroke-width="1"/>
<path d="M18.500 5.500L19.800 6V27L18.500 28z" fill="#141414"/>
<path d="M0.500 2.600L17.500 5.300Q18.700 5.500 18.700 6.700V28.200L1.800 25Q0.500 24.700 0.500 23.500z" fill="url(#g22)" stroke="#93a3b0" stroke-width=".6"/>
<path d="M3 8.300L16 10.500M3 12L16 14.300M3 14.300L16 16.600M3 18L16 20.400M3 20.300L16 22.700" stroke="#9fadb8" stroke-width="1.200" stroke-dasharray="2.500 .5 4 .6"/></g>
<g transform="translate(1112 888.6)"><circle r="10.6" fill="url(#g19)" stroke="#ecc8e8" stroke-width=".8"/>
<path d="M-2-7.600H2V-2H7.600V2H2V7.600H-2V2H-7.600V-2H-2z" fill="url(#g20)" stroke="#d8d8d8" stroke-width=".3"/></g>
<g transform="translate(1160 873.7)"><path d="M0.700 3.1799999999999997V26.02A9.9 3.1799999999999997 0 0 0 20.5 26.02V3.1799999999999997z" fill="url(#g12)" stroke="#141414" stroke-width="1"/><path d="M6.4 9.18V25.02" stroke="#fff" stroke-width="1.200" opacity="0.35"/><path d="M8.9 9.18V25.02" stroke="#fff" stroke-width="1.200" opacity="0.25"/><path d="M11.7 9.18V25.02" stroke="#fff" stroke-width="1.200" opacity="0.3"/><path d="M14.4 9.18V25.02" stroke="#fff" stroke-width="1.200" opacity="0.2"/><path d="M0.300 3.1799999999999997V7.18A10.6 3.1799999999999997 0 0 0 20.9 7.18V3.1799999999999997z" fill="url(#g13)" stroke="#0c2a5a" stroke-width=".7"/>
<ellipse cx="10.6" cy="3.1799999999999997" rx="10.299999999999999" ry="3.1799999999999997" fill="#c9d0d8" stroke="#141414" stroke-width="1"/>
<ellipse cx="10.6" cy="3.6799999999999997" rx="8.3" ry="2.0799999999999996" fill="url(#g23)"/></g>
<g transform="translate(1235 877.5)"><path d="M0 .5H13V18H0z" fill="#4a3a2a"/>
<path d="M6.500 2H11.500V16.500H6.500z" fill="#e4ecfa"/>
<path d="M1.500 3.800L9 8.100V20.900L1.500 17.100z" fill="url(#g24)" stroke="#6a4a10" stroke-width=".6"/>
<circle cx="6.600" cy="13" r=".9" fill="#4a3010"/>
<path d="M11.400 7.600L19 .5V4.500H25.200V10.900H19V14.700z" fill="url(#g21)" stroke="#3a5ed0" stroke-width=".4"/></g></svg>
<span class="t f-menu" style="left:9.50px;top:5.00px;color:#fff;transform:scaleX(0.9075);">DATEI</span>
<span class="t f-menu" style="left:71.00px;top:5.00px;color:#444;transform:scaleX(0.9381);">Start</span>
<span class="t f-menu" style="left:124.40px;top:5.00px;color:#444;letter-spacing:0.054px;">HausManager</span>
<span class="t f-menu" style="left:227.30px;top:5.00px;color:#444;letter-spacing:0.026px;">SeminarManager</span>
<span class="t f-menu" style="left:346.50px;top:5.00px;color:#a4373a;letter-spacing:-0.055px;">Rechnungswesen</span>
<span class="t f-menu" style="left:467.20px;top:5.00px;color:#444;transform:scaleX(0.8923);">Extras</span>
<span class="t f-menu" style="left:526.50px;top:5.00px;color:#444;letter-spacing:0.340px;">Outlook</span>
<span class="t f-menu" style="left:598.50px;top:5.00px;color:#444;letter-spacing:0.070px;">Einstellungen</span>
<span class="t f-menu" style="left:698.20px;top:5.00px;color:#444;transform:scaleX(1.0991);">Hilfe</span>
<span class="t f-menu" style="left:752.00px;top:5.00px;color:#444;transform:scaleX(1.0934);">QM</span>
<span class="t f-seg" style="left:1.70px;top:66.00px;color:#444;letter-spacing:-0.125px;">Rechnungen</span>
<span class="t f-seg" style="left:89.40px;top:66.00px;color:#444;letter-spacing:-0.053px;">Offene</span>
<span class="t f-seg" style="left:73.80px;top:82.00px;color:#444;letter-spacing:-0.136px;">Rechnungen</span>
<span class="t f-seg" style="left:153.10px;top:66.00px;color:#444;letter-spacing:-0.035px;">Sammel-</span>
<span class="t f-seg" style="left:145.50px;top:82.00px;color:#444;letter-spacing:0.067px;">abrechnung</span>
<span class="t f-seg" style="left:214.20px;top:66.00px;color:#444;letter-spacing:0.075px;">Abrechnungs-</span>
<span class="t f-seg" style="left:239.60px;top:82.00px;color:#444;letter-spacing:-0.168px;">läufe</span>
<span class="t f-seg" style="left:295.10px;top:66.00px;color:#444;letter-spacing:0.011px;">Zahlungs-</span>
<span class="t f-seg" style="left:298.60px;top:82.00px;color:#444;letter-spacing:-0.103px;">eingänge</span>
<span class="t f-seg" style="left:371.50px;top:66.00px;color:#444;letter-spacing:-0.073px;">Offene</span>
<span class="t f-seg" style="left:354.20px;top:82.00px;color:#444;letter-spacing:0.039px;">Anzahlungen</span>
<span class="t f-seg" style="left:443.30px;top:66.00px;color:#444;letter-spacing:-0.008px;">Fibu-</span>
<span class="t f-seg" style="left:440.70px;top:82.00px;color:#444;transform:scaleX(0.9070);">Export</span>
<span class="t f-seg" style="left:480.10px;top:66.00px;color:#444;letter-spacing:0.135px;">Zahlungsimport</span>
<span class="t f-seg" style="left:575.10px;top:66.00px;color:#444;letter-spacing:-0.287px;">IDEA-Export</span>
<span class="t f-seg" style="left:570.80px;top:82.00px;color:#444;letter-spacing:-0.124px;">(Finanzprüfer)</span>
<span class="t f-seg" style="left:649.40px;top:66.00px;color:#444;letter-spacing:-0.181px;">Bankeinzug</span>
<span class="t f-seg" style="left:724.20px;top:66.00px;color:#444;letter-spacing:0.090px;">Auswertungen</span>
<span class="t f-seg" style="left:815.60px;top:66.00px;color:#444;letter-spacing:-0.098px;">Leistungsstamm</span>
<span class="t f-seg" style="left:907.30px;top:66.00px;color:#444;letter-spacing:0.056px;">Abrechnungsarten</span>
<span class="t f-seg" style="left:1018.00px;top:66.00px;color:#444;transform:scaleX(0.8611);">SEPA-</span>
<span class="t f-seg" style="left:1010.60px;top:82.00px;color:#444;letter-spacing:-0.027px;">Mandate</span>
<span class="t f-seg" style="left:180.50px;top:101.00px;color:#666;letter-spacing:-0.203px;">Rechnungen</span>
<span class="t f-seg" style="left:538.50px;top:101.00px;color:#666;letter-spacing:-0.072px;">Import/Export</span>
<span class="t f-seg" style="left:725.30px;top:101.00px;color:#666;letter-spacing:-0.010px;">Auswertungen</span>
<span class="t f-seg" style="left:901.50px;top:101.00px;color:#666;letter-spacing:-0.065px;">Einstellungen</span>
<span class="t f-seg" style="left:25.70px;top:122.00px;color:#a4373a;transform:scaleX(0.8757);">Start</span>
<span class="t f-segb" style="left:86.30px;top:123.00px;color:#a4373a;transform:scaleX(0.9431);">Abrechnungsarten</span>
<span class="t f-title" style="left:7.10px;top:153.00px;color:#000080;letter-spacing:-0.612px;">Abrechnungsarten</span>
<span class="t f-tah" style="left:9.50px;top:192.00px;color:#343434;letter-spacing:-0.143px;">Abrechnungsart</span>
<span class="t f-tah" style="left:230.60px;top:192.00px;color:#343434;letter-spacing:0.333px;">Für</span>
<span class="t f-tah" style="left:300.00px;top:192.00px;color:#343434;letter-spacing:-0.080px;">Gelöscht</span>
<div class="b" style="left:7px;top:215px;width:226px;height:22px;overflow:hidden"><span class="t f-lst" style="left:2.70px;top:2.00px;color:#fff;letter-spacing:-0.179px;">&lt;neu&gt;116</span></div>
<span class="t f-lst" style="left:236.30px;top:217.00px;color:#fff;letter-spacing:0.428px;">kein/Kunde</span>
<div class="b" style="left:7px;top:237px;width:226px;height:22px;overflow:hidden"><span class="t f-lst" style="left:2.70px;top:2.00px;color:#000;letter-spacing:0.281px;">Dozent</span></div>
<span class="t f-lst" style="left:237.30px;top:239.00px;color:#000;letter-spacing:0.520px;">SmTn</span>
<div class="b" style="left:7px;top:259px;width:226px;height:22px;overflow:hidden"><span class="t f-lst" style="left:2.70px;top:2.00px;color:#000;letter-spacing:0.147px;">Erwachsenengruppen</span></div>
<span class="t f-lst" style="left:236.23px;top:261.00px;color:#000;transform:scaleX(1.0672);">BlTn</span>
<div class="b" style="left:7px;top:281px;width:226px;height:22px;overflow:hidden"><span class="t f-lst" style="left:2.70px;top:2.00px;color:#000;letter-spacing:0.442px;">Extern_VA 1+2</span></div>
<span class="t f-lst" style="left:237.30px;top:283.00px;color:#000;letter-spacing:-0.131px;">Seminar</span>
<div class="b" style="left:7px;top:303px;width:226px;height:22px;overflow:hidden"><span class="t f-lst" style="left:2.70px;top:2.00px;color:#000;letter-spacing:0.263px;">Extern_VA standard u. ermäßigt</span></div>
<span class="t f-lst" style="left:237.30px;top:305.00px;color:#000;letter-spacing:-0.131px;">Seminar</span>
<div class="b" style="left:7px;top:325px;width:226px;height:22px;overflow:hidden"><span class="t f-lst" style="left:3.70px;top:2.00px;color:#000;letter-spacing:-0.169px;">Gastgruppe</span></div>
<span class="t f-lst" style="left:236.30px;top:327.00px;color:#000;letter-spacing:0.053px;">Belegung</span>
<div class="b" style="left:7px;top:347px;width:226px;height:22px;overflow:hidden"><span class="t f-lst" style="left:2.63px;top:2.00px;color:#000;transform:scaleX(1.0656);">Intern_VA 1+2</span></div>
<span class="t f-lst" style="left:237.30px;top:349.00px;color:#000;letter-spacing:-0.131px;">Seminar</span>
<div class="b" style="left:7px;top:369px;width:226px;height:22px;overflow:hidden"><span class="t f-lst" style="left:2.70px;top:2.00px;color:#000;letter-spacing:0.321px;">Intern_VA standard u. ermäßigt</span></div>
<span class="t f-lst" style="left:237.30px;top:371.00px;color:#000;letter-spacing:-0.131px;">Seminar</span>
<div class="b" style="left:7px;top:391px;width:226px;height:22px;overflow:hidden"><span class="t f-lst" style="left:2.70px;top:2.00px;color:#000;letter-spacing:0.153px;">Kursabrechnung</span></div>
<span class="t f-lst" style="left:236.30px;top:393.00px;color:#000;letter-spacing:0.053px;">Belegung</span>
<div class="b" style="left:7px;top:413px;width:226px;height:22px;overflow:hidden"><span class="t f-lst" style="left:2.70px;top:2.00px;color:#000;letter-spacing:0.145px;">leere Abrechnung</span></div>
<span class="t f-lst" style="left:236.30px;top:415.00px;color:#000;letter-spacing:0.428px;">kein/Kunde</span>
<div class="b" style="left:7px;top:435px;width:226px;height:22px;overflow:hidden"><span class="t f-lst" style="left:2.70px;top:2.00px;color:#000;letter-spacing:0.095px;">Mahlzeit und Übernachtung</span></div>
<span class="t f-lst" style="left:236.30px;top:437.00px;color:#000;letter-spacing:0.053px;">Belegung</span>
<div class="b" style="left:7px;top:457px;width:226px;height:22px;overflow:hidden"><span class="t f-lst" style="left:3.70px;top:2.00px;color:#000;letter-spacing:0.017px;">Schulklassen</span></div>
<span class="t f-lst" style="left:236.30px;top:459.00px;color:#000;letter-spacing:0.053px;">Belegung</span>
<div class="b" style="left:7px;top:479px;width:226px;height:22px;overflow:hidden"><span class="t f-lst" style="left:3.70px;top:2.00px;color:#000;letter-spacing:0.124px;">SMTN</span></div>
<span class="t f-lst" style="left:237.30px;top:481.00px;color:#000;letter-spacing:0.520px;">SmTn</span>
<div class="b" style="left:7px;top:501px;width:226px;height:22px;overflow:hidden"><span class="t f-lst" style="left:4.70px;top:2.00px;color:#000;letter-spacing:-0.078px;">TN Gebühr1</span></div>
<span class="t f-lst" style="left:237.30px;top:503.00px;color:#000;letter-spacing:0.520px;">SmTn</span>
<div class="b" style="left:7px;top:523px;width:226px;height:22px;overflow:hidden"><span class="t f-lst" style="left:4.70px;top:2.00px;color:#000;letter-spacing:0.022px;">TN Gebühr2</span></div>
<span class="t f-lst" style="left:237.30px;top:525.00px;color:#000;letter-spacing:0.520px;">SmTn</span>
<span class="t f-tah" style="left:8.20px;top:891.80px;color:#343434;letter-spacing:-0.021px;">Auch gelöschte anzeigen:</span>
<span class="t f-tah" style="left:425.80px;top:204.00px;color:#343434;letter-spacing:-0.042px;">Bezeichnung:</span>
<span class="t f-tah" style="left:561.90px;top:204.00px;color:#2e75b6;">&lt;neu&gt;116</span>
<span class="t f-ser" style="left:992.50px;top:203.80px;color:#7f7f7f;letter-spacing:0.331px;">ID:</span>
<span class="t f-tah" style="left:1028.70px;top:204.00px;color:#222;letter-spacing:-0.480px;">116</span>
<span class="t f-tah" style="left:425.80px;top:243.00px;color:#343434;">Bemerkung:</span>
<span class="t f-tah" style="left:425.80px;top:315.00px;color:#343434;">Für:</span>
<span class="t f-tah" style="left:560.80px;top:315.00px;color:#2e75b6;">kein/Kunde</span>
<span class="t f-tah" style="left:1138.20px;top:314.80px;color:#343434;letter-spacing:-0.017px;">Gelöscht:</span>
<span class="t f-tah" style="left:417.80px;top:351.00px;color:#000;letter-spacing:0.064px;">Positionen</span>
<span class="t f-tah" style="left:505.40px;top:353.00px;color:#000;letter-spacing:0.114px;">Positionsdetails</span>
<span class="t f-tah" style="left:632.60px;top:353.00px;color:#000;letter-spacing:0.021px;">Übersicht</span>
<span class="t f-tah" style="left:439.90px;top:384.00px;color:#343434;letter-spacing:-0.036px;">Leistung</span>
<span class="t f-tah" style="left:612.70px;top:384.00px;color:#343434;letter-spacing:0.133px;">Anzahl-Formel</span>
<span class="t f-tah" style="left:733.90px;top:384.00px;color:#343434;letter-spacing:0.179px;">Para.</span>
<span class="t f-tah" style="left:783.70px;top:384.00px;color:#343434;letter-spacing:-0.269px;">Empfänger</span>
<span class="t f-tah" style="left:949.70px;top:384.00px;color:#343434;letter-spacing:0.392px;">Kdnr.</span>
<span class="t f-tah" style="left:992.30px;top:384.00px;color:#343434;letter-spacing:0.066px;">Preiskategorie</span>
<span class="t f-tah" style="left:1125.50px;top:384.00px;color:#343434;transform:scaleX(1.0734);">Abw.</span>
<span class="t f-tah" style="left:1190.30px;top:384.00px;color:#343434;letter-spacing:-0.030px;">Sort.</span>
<span class="t f-tahb" style="left:439.70px;top:407.00px;color:#2e75b6;letter-spacing:-0.283px;">Standard</span>
<span class="t f-tah" style="left:784.60px;top:408.00px;color:#2e75b6;letter-spacing:-0.109px;">kein</span>
<span class="t f-tah" style="left:981.60px;top:408.00px;color:#2e75b6;transform:scaleX(0.8444);">0</span>
<span class="t f-tah" style="left:993.70px;top:408.00px;color:#000080;letter-spacing:-0.342px;">Standard</span>
<span class="t f-tah" style="left:1215.50px;top:408.00px;color:#2e75b6;transform:scaleX(0.8778);">0</span>
<span class="t f-nav" style="left:425.60px;top:809.00px;color:#444;letter-spacing:0.008px;">Datensatz:</span>
<span class="t f-nav" style="left:516.90px;top:809.00px;color:#000;letter-spacing:-0.144px;">1 von 1</span>
<span class="t f-nav" style="left:648.70px;top:809.00px;color:#a0a0a0;letter-spacing:-0.005px;">Kein Filter</span>
<span class="t f-nav" style="left:716.50px;top:809.00px;color:#000;letter-spacing:-0.058px;">Suchen</span>

</body></html>
